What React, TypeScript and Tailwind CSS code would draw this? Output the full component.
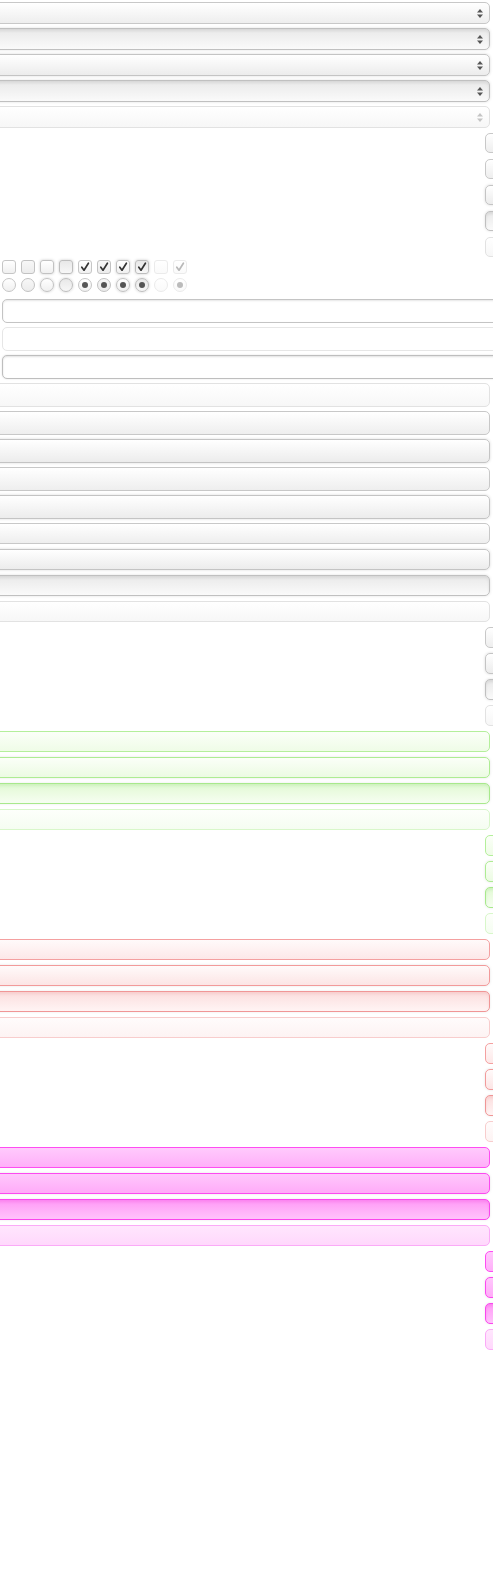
import React from 'react'

type State = 'normal' | 'hover' | 'active' | 'disabled'
type Tone = 'grey' | 'green' | 'red' | 'pink'

const TONE: Record<Tone, Record<State, string>> = {
  grey: {
    normal: 'border-[#c8c8c8] bg-linear-to-b from-[#ffffff] to-[#eeeeee]',
    hover: 'border-[#c4c4c4] bg-linear-to-b from-[#ffffff] to-[#ececec] shadow-[0_0_3px_rgba(0,0,0,0.15)]',
    active: 'border-[#c0c0c0] bg-linear-to-b from-[#e9e9e9] to-[#fafafa] shadow-[0_0_3px_rgba(0,0,0,0.12),inset_0_2px_3px_rgba(0,0,0,0.08)]',
    disabled: 'border-[#e2e2e2] bg-linear-to-b from-[#ffffff] to-[#f7f7f7]',
  },
  green: {
    normal: 'border-[#b4ef9b] bg-linear-to-b from-[#fbfff8] to-[#effcE7]',
    hover: 'border-[#aeec93] bg-linear-to-b from-[#fbfff8] to-[#ecfbe3] shadow-[0_0_3px_rgba(0,0,0,0.1)]',
    active: 'border-[#a8e98c] bg-linear-to-b from-[#e2f9d4] to-[#f6fef1] shadow-[0_0_3px_rgba(0,0,0,0.08),inset_0_2px_3px_rgba(90,200,60,0.15)]',
    disabled: 'border-[#d8f7ca] bg-linear-to-b from-[#fdfffb] to-[#f5fdf1]',
  },
  red: {
    normal: 'border-[#f4a0a0] bg-linear-to-b from-[#fffafa] to-[#fde8e8]',
    hover: 'border-[#f29a9a] bg-linear-to-b from-[#fffafa] to-[#fce5e5] shadow-[0_0_3px_rgba(0,0,0,0.1)]',
    active: 'border-[#f09696] bg-linear-to-b from-[#fbdede] to-[#fff4f4] shadow-[0_0_3px_rgba(0,0,0,0.08),inset_0_2px_3px_rgba(220,80,80,0.12)]',
    disabled: 'border-[#f8cdcd] bg-linear-to-b from-[#fffcfc] to-[#fdf3f3]',
  },
  pink: {
    normal: 'border-[#ff4cf2] bg-linear-to-b from-[#ffcafc] to-[#ffaff9]',
    hover: 'border-[#fc49f0] bg-linear-to-b from-[#ffc7fc] to-[#ffabf8] shadow-[0_0_3px_rgba(0,0,0,0.1)]',
    active: 'border-[#fa46ee] bg-linear-to-b from-[#ff99f6] to-[#ffc3fb] shadow-[0_0_3px_rgba(0,0,0,0.08),inset_0_2px_3px_rgba(220,0,200,0.15)]',
    disabled: 'border-[#fbaaf7] bg-linear-to-b from-[#ffe6fd] to-[#ffd8fc]',
  },
}

function Arrows({ disabled }: { disabled?: boolean }) {
  const c = disabled ? '#c4c4c4' : '#555555'
  return (
    <svg width="6" height="9" viewBox="0 0 6 9" className="mr-[6px]">
      <path d="M0 3.5 L3 0 L6 3.5 Z" fill={c} />
      <path d="M0 5.5 L6 5.5 L3 9 Z" fill={c} />
    </svg>
  )
}

// slot = one row of fixed pitch; padding (not margin) puts the control a few px below its top
function Wide({ tone, state, h, slot, arrows }: {
  tone: Tone
  state: State
  h: string
  slot: string
  arrows?: boolean
}) {
  return (
    <div className={slot}>
      <div className={`ml-[-8px] w-[498px] ${h} rounded-[5px] border flex items-center justify-end ${TONE[tone][state]}`}>
        {arrows && <Arrows disabled={state === 'disabled'} />}
      </div>
    </div>
  )
}

function Small({ tone, state, h }: { tone: Tone; state: State; h: string }) {
  return (
    <div className="h-[26px] pt-[3px]">
      <div className={`ml-[485px] w-[30px] ${h} rounded-[5px] border ${TONE[tone][state]}`} />
    </div>
  )
}

const CHECKS = [
  { checked: false, cls: 'border-[#c6c6c6] from-white to-[#f0f0f0]' },
  { checked: false, cls: 'border-[#c2c2c2] from-[#f7f7f7] to-[#ececec]' },
  { checked: false, cls: 'border-[#c2c2c2] from-white to-[#f0f0f0] shadow-[0_0_3px_rgba(0,0,0,0.2)]' },
  { checked: false, cls: 'border-[#bdbdbd] from-[#e8e8e8] to-[#f7f7f7] shadow-[0_0_3px_rgba(0,0,0,0.2)]' },
  { checked: true, cls: 'border-[#c6c6c6] from-white to-[#f0f0f0]' },
  { checked: true, cls: 'border-[#c2c2c2] from-[#f7f7f7] to-[#ececec]' },
  { checked: true, cls: 'border-[#c2c2c2] from-white to-[#f0f0f0] shadow-[0_0_3px_rgba(0,0,0,0.2)]' },
  { checked: true, cls: 'border-[#bdbdbd] from-[#e8e8e8] to-[#f7f7f7] shadow-[0_0_3px_rgba(0,0,0,0.2)]' },
  { checked: false, cls: 'border-[#ebebeb] from-white to-[#fafafa]', disabled: true },
  { checked: true, cls: 'border-[#ebebeb] from-white to-[#fafafa]', disabled: true },
]

function CheckRow() {
  return (
    <div className="h-[18px] flex gap-[5px] pl-[2px]">
      {CHECKS.map((c, i) => (
        <div key={i} className={`w-[14px] h-[14px] rounded-[3px] border bg-linear-to-b flex items-center justify-center ${c.cls}`}>
          {c.checked && (
            <svg width="10" height="10" viewBox="0 0 10 10">
              <path d="M1.8 5.2 L4 8.2 L8.4 1.2" fill="none" stroke={c.disabled ? '#b8b8b8' : '#333333'} strokeWidth="1.7" strokeLinecap="round" strokeLinejoin="round" />
            </svg>
          )}
        </div>
      ))}
    </div>
  )
}

function RadioRow() {
  return (
    <div className="h-[18px] flex gap-[5px] pl-[2px]">
      {CHECKS.map((c, i) => (
        <div key={i} className={`w-[14px] h-[14px] rounded-full border bg-linear-to-b flex items-center justify-center ${c.cls}`}>
          {c.checked && <div className={`w-[6px] h-[6px] rounded-full ${c.disabled ? 'bg-[#bbbbbb]' : 'bg-[#555555]'}`} />}
        </div>
      ))}
    </div>
  )
}

const INPUTS = [
  'border-[#c4c4c4] shadow-[inset_0_1px_2px_rgba(0,0,0,0.1)]',
  'border-[#e6e6e6]',
  'border-[#bebebe] shadow-[inset_0_1px_2px_rgba(0,0,0,0.12),0_0_2px_rgba(0,0,0,0.12)]',
]

const SELECTS: State[] = ['normal', 'active', 'hover', 'active', 'disabled']
const TOP_SMALL: State[] = ['normal', 'normal', 'hover', 'active', 'disabled']
const BUTTONS: State[] = ['disabled', 'normal', 'hover', 'normal', 'hover']
const GROUP: State[] = ['normal', 'hover', 'active', 'disabled']
const TONES: Tone[] = ['grey', 'green', 'red', 'pink']

export default function App() {
  return (
    <div className="relative w-[493px] h-[1581px] overflow-hidden bg-white font-['Liberation_Sans',sans-serif]">
      {SELECTS.map((s, i) => (
        <Wide key={`s${i}`} tone="grey" state={s} h="h-[22px]" slot="h-[26px] pt-[2px]" arrows />
      ))}

      {TOP_SMALL.map((s, i) => (
        <Small key={`t${i}`} tone="grey" state={s} h="h-[20px]" />
      ))}

      <CheckRow />
      <RadioRow />

      {INPUTS.map((cls, i) => (
        <div key={`i${i}`} className="h-[28px] pt-[3px]">
          <div className={`ml-[2px] w-[520px] h-[24px] rounded-[5px] border bg-white ${cls}`} />
        </div>
      ))}

      {BUTTONS.map((s, i) => (
        <Wide key={`b${i}`} tone="grey" state={s} h="h-[24px]" slot="h-[28px] pt-[3px]" />
      ))}

      {TONES.map((tone) => (
        <React.Fragment key={tone}>
          {GROUP.map((s, i) => (
            <Wide key={`w${i}`} tone={tone} state={s} h="h-[21px]" slot="h-[26px] pt-[3px]" />
          ))}
          {GROUP.map((s, i) => (
            <Small key={`m${i}`} tone={tone} state={s} h="h-[21px]" />
          ))}
        </React.Fragment>
      ))}
    </div>
  )
}
